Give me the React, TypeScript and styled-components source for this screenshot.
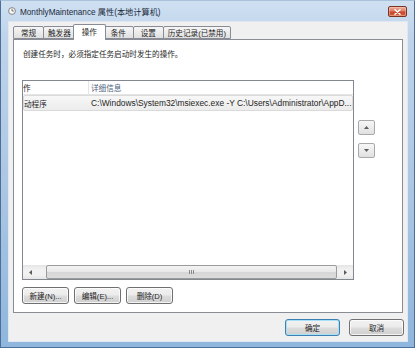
import styled, { createGlobalStyle } from "styled-components";

const GlobalStyle = createGlobalStyle`
  * { box-sizing: border-box; }
  html, body { margin: 0; padding: 0; }
  body {
    width: 415px;
    height: 348px;
    overflow: hidden;
    font-family: "Liberation Sans", "Noto Sans CJK SC", sans-serif;
    font-size: 7.6px;
    color: #1e1e1e;
  }
`;

const tabs = ["常规", "触发器", "操作", "条件", "设置", "历史记录(已禁用)"];

const ClockIcon = () => (
    <svg width="8" height="8" viewBox="0 0 8 8">
        <circle cx="4" cy="4" r="3.4" fill="#f7f7f7" stroke="#7a7a7a" strokeWidth="0.9" />
        <path d="M4 1.8V4H5.8" fill="none" stroke="#555" strokeWidth="0.8" />
    </svg>
);

const CloseGlyph = () => (
    <svg width="7" height="6" viewBox="0 0 7 6">
        <path d="M1 0.8L6 5.2M6 0.8L1 5.2" stroke="#fff" strokeWidth="1.5" strokeLinecap="round" />
    </svg>
);

const Arrow = ({ dir }: { dir: "up" | "down" | "left" | "right" }) => {
    const pts = {
        up: "0,3 2.5,0 5,3",
        down: "0,0 2.5,3 5,0",
        left: "3,0 0,2.5 3,5",
        right: "0,0 3,2.5 0,5",
    }[dir];
    const vertical = dir === "up" || dir === "down";
    return (
        <svg width={vertical ? 5 : 3} height={vertical ? 3 : 5} viewBox={vertical ? "0 0 5 3" : "0 0 3 5"}>
            <polygon points={pts} fill="#5c5c5c" />
        </svg>
    );
};

const App = () => {
    // 列表横向滚动后只露出的部分
    const visibleAction = { header: "作", value: "动程序" };

    return (
        <>
            <GlobalStyle />
            <Window>
                <TitleBar>
                    <TitleLeft>
                        <ClockIcon />
                        <TitleText>MonthlyMaintenance 属性(本地计算机)</TitleText>
                    </TitleLeft>
                    <CloseButton><CloseGlyph /></CloseButton>
                </TitleBar>

                <Client>
                    <TabStrip>
                        {tabs.map((t) => (
                            <Tab key={t} $active={t === "操作"}>{t}</Tab>
                        ))}
                    </TabStrip>

                    <Panel>
                        <Description>创建任务时，必须指定任务启动时发生的操作。</Description>

                        <ListRow>
                            <ListBox>
                                <Header>
                                    <FirstCell $header>{visibleAction.header}</FirstCell>
                                    <Cell $header>详细信息</Cell>
                                </Header>
                                <Row>
                                    <FirstCell>{visibleAction.value}</FirstCell>
                                    <PathCell>C:\Windows\System32\msiexec.exe -Y C:\Users\Administrator\AppD...</PathCell>
                                </Row>
                                <ListFill />
                                <HScroll>
                                    <ScrollArrow><Arrow dir="left" /></ScrollArrow>
                                    <ScrollTrack>
                                        <Thumb>
                                            <Grip />
                                        </Thumb>
                                    </ScrollTrack>
                                    <ScrollArrow><Arrow dir="right" /></ScrollArrow>
                                </HScroll>
                            </ListBox>

                            <SideColumn>
                                <SmallButton><Arrow dir="up" /></SmallButton>
                                <SmallButton><Arrow dir="down" /></SmallButton>
                            </SideColumn>
                        </ListRow>

                        <ButtonRow>
                            <Button>新建(N)...</Button>
                            <Button>编辑(E)...</Button>
                            <Button>删除(D)</Button>
                        </ButtonRow>
                    </Panel>

                    <Footer>
                        <Button $default $w={55}>确定</Button>
                        <Button $w={55}>取消</Button>
                    </Footer>
                </Client>
            </Window>
        </>
    );
};

export default App;

const Window = styled.div`
    width: 415px;
    height: 348px;
    display: flex;
    flex-direction: column;
    padding: 0 6px 5px 7px;
    border: 1px solid #4b6f99;
    border-top-color: #a8c2de;
    background: linear-gradient(180deg, #cfe0f1 0%, #bfd4eb 10%, #abc6e3 55%, #8fb6dd 100%);
`;

const TitleBar = styled.div`
    height: 20px;
    display: flex;
    justify-content: space-between;
    align-items: center;
    flex-shrink: 0;
`;

const TitleLeft = styled.div`
    display: flex;
    align-items: center;
    gap: 4px;

    svg {
        display: block;
    }
`;

const TitleText = styled.span`
    font-size: 8.2px;
    color: #1b2a3c;
`;

const CloseButton = styled.div`
    width: 19px;
    height: 11px;
    margin-right: 1px;
    align-self: flex-start;
    margin-top: 5px;
    border: 1px solid #7a3424;
    border-radius: 2px;
    background: linear-gradient(180deg, #eeb1a1 0%, #dd7d66 45%, #c7462b 55%, #d4613f 100%);
    display: flex;
    align-items: center;
    justify-content: center;
    box-shadow: inset 0 0 0 1px rgba(255, 210, 190, 0.45);
`;

const Client = styled.div`
    flex: 1;
    display: flex;
    flex-direction: column;
    background: #f0f0f0;
    padding: 3px 5px 0 5px;
    box-shadow: inset 0 0 0 1px #dfe8f2;
`;

const TabStrip = styled.div`
    height: 16px;
    display: flex;
    align-items: flex-end;
    margin-bottom: -1px;
    padding-left: 1px;
    position: relative;
    z-index: 1;
    flex-shrink: 0;
`;

const Tab = styled.div<{ $active?: boolean }>`
    min-width: ${({ $active }) => ($active ? 33 : 31)}px;
    height: ${({ $active }) => ($active ? 16 : 13)}px;
    margin: 0 ${({ $active }) => ($active ? -2 : 0)}px ${({ $active }) => ($active ? 0 : 1)}px
        ${({ $active }) => ($active ? -3 : -1)}px;
    padding: 0 4px ${({ $active }) => ($active ? 2 : 0)}px;
    border: 1px solid #898c95;
    border-bottom: ${({ $active }) => ($active ? "none" : "1px solid #898c95")};
    border-radius: 2px 2px 0 0;
    background: ${({ $active }) =>
        $active ? "#ffffff" : "linear-gradient(180deg, #f6f6f6 0%, #ebebeb 50%, #e0e0e0 100%)"};
    display: flex;
    align-items: center;
    justify-content: center;
    white-space: nowrap;
    position: relative;
    z-index: ${({ $active }) => ($active ? 2 : 1)};
`;

const Panel = styled.div`
    flex: 1;
    display: flex;
    flex-direction: column;
    background: #ffffff;
    border: 1px solid #898c95;
    padding: 0 8px;
`;

const Description = styled.p`
    margin: 10px 0 0 1px;
    line-height: 10px;
`;

const ListRow = styled.div`
    margin-top: 20px;
    display: flex;
    gap: 4px;
`;

const ListBox = styled.div`
    width: 332px;
    height: 200px;
    border: 1px solid #828790;
    display: flex;
    flex-direction: column;
    background: #ffffff;
`;

const Header = styled.div`
    height: 14px;
    display: flex;
    border-bottom: 1px solid #e5e5e5;
    flex-shrink: 0;
`;

const Row = styled.div`
    height: 16px;
    display: flex;
    border: 1px solid #dadada;
    border-radius: 2px;
    background: linear-gradient(180deg, #f7f7f7 0%, #ececec 100%);
    flex-shrink: 0;
`;

const FirstCell = styled.div<{ $header?: boolean }>`
    width: 66px;
    flex-shrink: 0;
    white-space: nowrap;
    display: flex;
    align-items: center;
    border-right: ${({ $header }) => ($header ? "1px solid #e5e5e5" : "none")};
`;

const Cell = styled.div<{ $header?: boolean }>`
    flex: 1;
    padding-left: 2px;
    white-space: nowrap;
    display: flex;
    align-items: center;
    color: ${({ $header }) => ($header ? "#4c607a" : "#1e1e1e")};
`;

const PathCell = styled(Cell)`
    font-size: 8.4px;
    padding-left: 1px;
`;

const ListFill = styled.div`
    flex: 1;
`;

const HScroll = styled.div`
    height: 14px;
    display: flex;
    background: linear-gradient(180deg, #e4e4e4 0%, #f1f1f1 30%, #f1f1f1 70%, #e6e6e6 100%);
    flex-shrink: 0;
`;

const ScrollArrow = styled.div`
    width: 15px;
    display: flex;
    align-items: center;
    justify-content: center;
`;

const ScrollTrack = styled.div`
    flex: 1;
    display: flex;
    padding: 0 1px 0 8px;
`;

const Thumb = styled.div`
    flex: 1;
    border: 1px solid #9b9b9b;
    border-radius: 2px;
    background: linear-gradient(180deg, #f3f3f3 0%, #e8e8e8 50%, #d6d6d6 51%, #dcdcdc 100%);
    display: flex;
    align-items: center;
    justify-content: center;
`;

const Grip = styled.div`
    width: 5px;
    height: 4px;
    border-left: 1px solid #8a8a8a;
    border-right: 1px solid #8a8a8a;
    background: linear-gradient(90deg, transparent 40%, #8a8a8a 40%, #8a8a8a 60%, transparent 60%);
`;

const SideColumn = styled.div`
    display: flex;
    flex-direction: column;
    gap: 8px;
    padding-top: 40px;
`;

const SmallButton = styled.div`
    width: 17px;
    height: 15px;
    border: 1px solid #a9a9a9;
    border-radius: 2px;
    background: linear-gradient(180deg, #f6f6f6 0%, #ececec 50%, #e0e0e0 100%);
    display: flex;
    align-items: center;
    justify-content: center;
`;

const ButtonRow = styled.div`
    margin-top: 7px;
    display: flex;
    gap: 5px;
`;

const Button = styled.button<{ $default?: boolean; $w?: number }>`
    width: ${({ $w }) => $w ?? 47}px;
    height: 17px;
    padding: 0;
    font: inherit;
    color: #1e1e1e;
    border: 1px solid ${({ $default }) => ($default ? "#3c7fb1" : "#707070")};
    border-radius: 3px;
    background: linear-gradient(180deg, #f2f2f2 0%, #ebebeb 48%, #dddddd 52%, #cfcfcf 100%);
    box-shadow: inset 0 0 0 1px ${({ $default }) => ($default ? "#a8e0f7" : "rgba(255, 255, 255, 0.75)")};
    white-space: nowrap;
`;

const Footer = styled.div`
    height: 29px;
    flex-shrink: 0;
    display: flex;
    justify-content: flex-end;
    align-items: flex-start;
    gap: 9px;
    padding-top: 6px;
    margin-right: -1px;
`;
